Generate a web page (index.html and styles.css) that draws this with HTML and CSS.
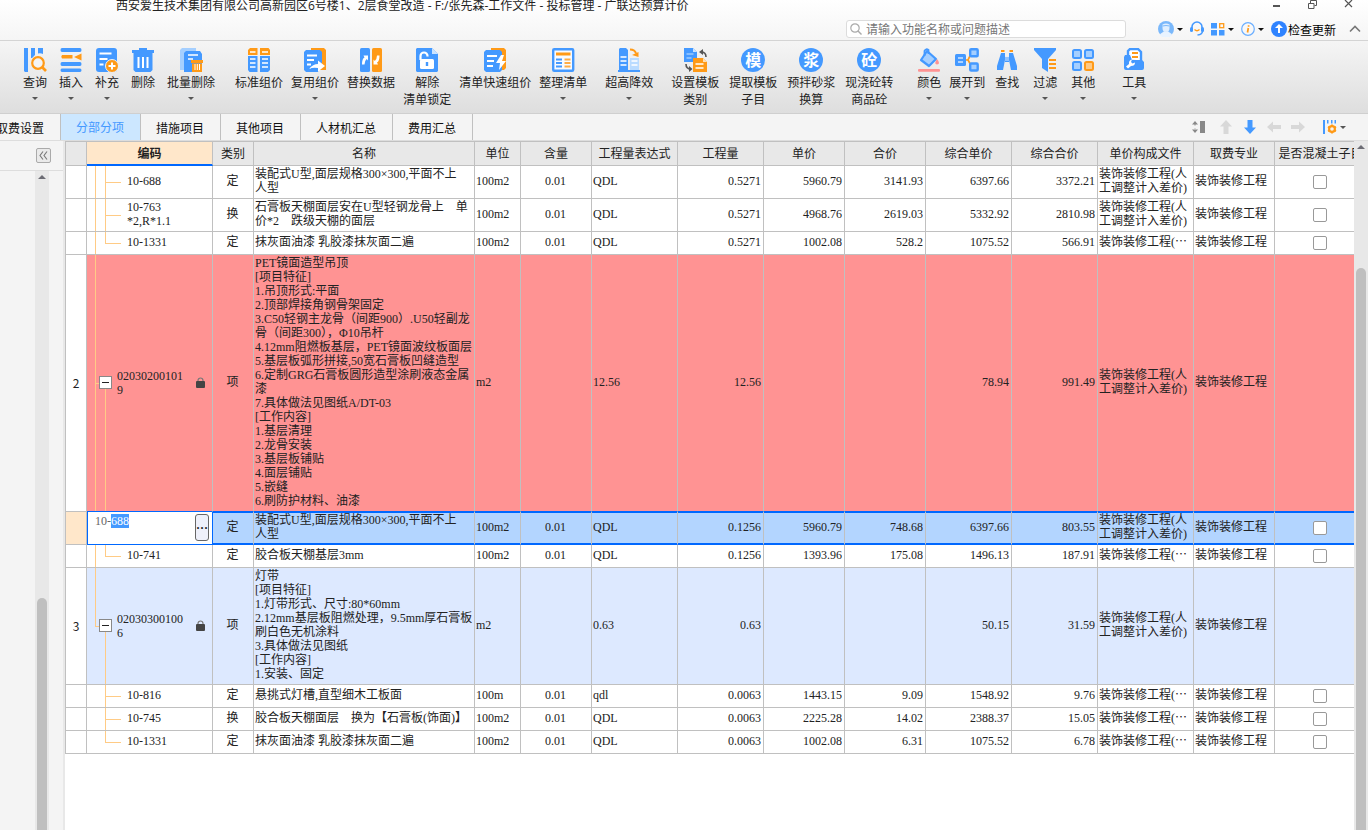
FILE: index.html
```html
<!DOCTYPE html>
<html lang="zh-CN">
<head>
<meta charset="utf-8">
<title>广联达预算计价</title>
<link rel="stylesheet" href="styles.css">
</head>
<body>
<div class="app">
  <header class="titlebar">
    <div class="caption">
      <h1 class="caption-text">西安爱生技术集团有限公司高新园区6号楼1、2层食堂改造 - F:/张先森-工作文件 - 投标管理 - 广联达预算计价</h1>
      <div class="window-buttons">
        <button aria-label="最小化"><svg width="9" height="10" viewBox="0 0 9 10"><path d="M1 6h7" stroke="#555" stroke-width="2"/></svg></button>
        <button aria-label="还原"><svg width="9" height="10" viewBox="0 0 9 10"><path d="M2.500 3V.5h6v5H6.500M.5 3.500h5.500v5H.5z" fill="none" stroke="#555"/></svg></button>
        <button aria-label="关闭"><svg width="9" height="10" viewBox="0 0 9 10"><path d="M1 0l7 7M8 0L1 7" stroke="#555" stroke-width="1.200"/></svg></button>
      </div>
    </div>
    <div class="utility">
      <label class="search">
        <svg width="12" height="12" viewBox="0 0 12 12"><circle cx="5" cy="5" r="4.200" fill="none" stroke="#aaa" stroke-width="1.200"/><path d="M8 8l3.500 3.500" stroke="#aaa" stroke-width="1.400"/></svg>
        <input type="text" aria-label="搜索" placeholder="请输入功能名称或问题描述">
      </label>
      <div class="utility-buttons">
        <button class="with-caret" aria-label="账户"><svg width="16" height="16" viewBox="0 0 16 16"><circle cx="8" cy="8" r="8" fill="#7ab8fb"/><path d="M2 14c0-2 3-2 4-4 1 1 3 1 4 0 1 2 4 2 4 4a8 8 0 0 1-12 0z" fill="#e8f3ff"/><path d="M4.500 3.500q3.500-2 7 0v3.500q0 4-3.500 4t-3.500-4z" fill="#e0efff"/><path d="M4.500 5q3.500-1 7 0" fill="none" stroke="#7ab8fb"/></svg><i class="caret dark"></i></button>
        <button aria-label="客服"><svg width="14" height="16" viewBox="0 0 14 16"><path d="M2 8V6a5 5 0 0 1 10 0v2" fill="none" stroke="#4499ff" stroke-width="1.600"/><rect x="0" y="6" width="3" height="5" rx="1.500" fill="#4499ff"/><rect x="11" y="6" width="3" height="5" rx="1.500" fill="#4499ff"/><path d="M12.500 10q0 3.500-5 4" fill="none" stroke="#4499ff" stroke-width="1.500"/><path d="M4.500 8.500q2.500 2.500 5 0" fill="none" stroke="#ff9a17" stroke-width="1.300"/></svg></button>
        <button class="with-caret" aria-label="应用"><svg width="14" height="14" viewBox="0 0 14 14"><path d="M0 1h6v5.500H0zM0 8h6v5.500H0zM8 8h5.500v5.500H8z" fill="#4499ff"/><rect x="8.700" y="1.700" width="4" height="4" fill="none" stroke="#ff9a17" stroke-width="1.300"/></svg><i class="caret dark"></i></button>
        <button class="with-caret" aria-label="信息"><svg width="14" height="14" viewBox="0 0 14 14"><circle cx="7" cy="7" r="6.300" fill="none" stroke="#6aaeff" stroke-width="1.200"/><path d="M7.300 6L6.500 10.500M7.600 3.300v1.400" stroke="#ff9a17" stroke-width="1.700"/></svg><i class="caret dark"></i></button>
        <button class="update"><svg width="16" height="16" viewBox="0 0 16 16"><circle cx="8" cy="8" r="8" fill="#2f83ff"/><path d="M8 3l4 4H9v5H7V7H4z" fill="#fff"/></svg><span>检查更新</span></button>
        <button class="fold" aria-label="收起功能区"><svg width="12" height="8" viewBox="0 0 12 8"><path d="M1 6.500l5-5 5 5" fill="none" stroke="#777" stroke-width="1.600"/></svg></button>
      </div>
    </div>
  </header>

  <div class="ribbon" role="toolbar">
    <div class="group edit">
      <button><svg viewBox="0 0 24 24"><path d="M1 0h4v24H2l-1-1zM8 0h4v7l-3 3H8zM15 0h5v6q-2-1-5-.500z" fill="#4499ff"/><circle cx="15" cy="15" r="5.800" fill="#f4f4f4" stroke="#ff9a17" stroke-width="2.200"/><path d="M19 19l4 4" stroke="#ff9a17" stroke-width="2.600"/></svg><span>查询</span><i class="caret"></i></button>
      <button><svg viewBox="0 0 24 24"><path d="M3 0h18q1.500 0 1.500 2t-1.500 2H3Q1.500 4 1.500 2T3 0zM3 14h18q1.500 0 1.500 2t-1.500 2H3q-1.500 0-1.500-2t1.500-2zM3 20.500h18q1.500 0 1.500 1.700T21 24H3q-1.500 0-1.500-1.800T3 20.500z" fill="#4499ff"/><path d="M3 7h10.500v3.500H3q-1.500-1.700 0-3.500zM15 9l7.500-3.500v7z" fill="#ff9a17"/></svg><span>插入</span><i class="caret"></i></button>
      <button><svg viewBox="0 0 24 24"><rect x="1" width="21" height="24" rx="3" fill="#4499ff"/><path d="M4.500 5.500h12M4.500 11h8M4.500 16.500h4" stroke="#fff" stroke-width="1.800"/><circle cx="17" cy="18" r="6.500" fill="#ff9a17" stroke="#e9f3ff"/><path d="M17 14.500v7M13.500 18h7" stroke="#fff" stroke-width="2"/></svg><span>补充</span><i class="caret"></i></button>
      <button><svg viewBox="0 0 24 24"><path d="M8 0h8v2h7v3H1V2h7zM2.500 5h19v17l-2 2h-15l-2-2z" fill="#4499ff"/><path d="M7.500 9v11M12 9v11M16.500 9v11" stroke="#fff" stroke-width="2"/></svg><span>删除</span></button>
      <button><svg viewBox="0 0 24 24"><path d="M1 2l2-2h14v22H1z" fill="#a5cfff"/><path d="M5 5l2-2h14l2 3v18H5z" fill="#4499ff"/><path d="M9 7h10M9 11h5" stroke="#fff" stroke-width="1.700"/><path d="M12 12h12v3H12zM13 15.500h10V24H13z" fill="#ff9a17"/><path d="M16 16v6M18.300 16v6M20.500 16v6" stroke="#fff"/></svg><span>批量删除</span><i class="caret"></i></button>
    </div>
    <div class="group pricing">
      <button><svg viewBox="0 0 24 24"><path d="M1 7V2l2-2h7.500v7zM13 7V0h8.500L23 2v5z" fill="#ff9a17"/><path d="M1 8h9.500v16H2.500L1 22zM13 8h10v14l-2 2h-8z" fill="#4499ff"/><path d="M3 4h5.500M15 4h6M3 11h5.500M15 11h6M3 15h5.500M15 15h6M3 19h5.500M15 19h6" stroke="#fff" stroke-width="1.500"/></svg><span>标准组价</span></button>
      <button><svg viewBox="0 0 24 24"><path d="M8 0h13l2 2v20H8z" fill="#ff9a17"/><path d="M1 4l2-2h14l2 2v10l-4 10H3l-2-2z" fill="#4499ff"/><path d="M4 7.500h10M4 12h7M4 16.500h4" stroke="#fff" stroke-width="1.800"/><path d="M6 21q4-5 9-5v-3.500l7 5.500-7 5.500V20q-5-1-9 1z" fill="#fff"/></svg><span>复用组价</span><i class="caret"></i></button>
      <button><svg viewBox="0 0 24 24"><rect x="1" width="10" height="24" rx="1.500" fill="#4499ff"/><rect x="13" width="10" height="24" rx="1.500" fill="#ff9a17"/><path d="M3 16.500q0-6 2.500-7L4.500 7.500H9v5l-1.300-1.500q-2 1.500-2.200 5.500zM20.500 7.500q0 6-2.500 7l1 2h-4.500v-5l1.300 1.500q2-1.500 2.200-5.500z" fill="#fff"/></svg><span>替换数据</span></button>
      <button><svg viewBox="0 0 24 24"><path d="M2 0h15l6 6v17l-1 1H2l-1-1V1z" fill="#4499ff"/><path d="M17 0l6 6h-6z" fill="#cbe3ff"/><rect x="5" y="11" width="14" height="10" rx="1.500" fill="#fff"/><path d="M5.500 12V8a3.500 3.500 0 0 1 7 0v.5" fill="none" stroke="#fff" stroke-width="2.200"/><path d="M12 14v4" stroke="#4499ff" stroke-width="2.400"/></svg><span>解除<br>清单锁定</span></button>
      <button><svg viewBox="0 0 24 24"><path d="M8 0h13l2 2v18l-2 2H8z" fill="#ff9a17"/><path d="M1 4l2-2h14l2 2v18l-2 2H3l-2-2z" fill="#4499ff"/><path d="M4 8h10M4 13h7M4 18h6" stroke="#fff" stroke-width="1.800"/><path d="M18 7l-5 8h4l-1 7 7-9h-4l2-6z" fill="#fff"/></svg><span>清单快速组价</span></button>
      <button><svg viewBox="0 0 24 24"><rect x="2.200" y="1.200" width="20" height="21.500" rx="1" fill="#f8fbff" stroke="#4499ff" stroke-width="2.400"/><path d="M5 4.500h14.500v3H5z" fill="#ff9a17"/><path d="M5 11.500h6M5 15h6M5 18.500h6" stroke="#4499ff" stroke-width="2"/><path d="M13.500 11.500h6M13.500 15h6M13.500 18.500h6" stroke="#ffad45" stroke-width="2"/></svg><span>整理清单</span><i class="caret"></i></button>
    </div>
    <div class="group">
      <button><svg viewBox="0 0 24 24"><path d="M2 1l1-1h6l2 2v20H2z" fill="#4499ff"/><path d="M1 22h22v2H1z" fill="#4499ff"/><path d="M13 10h9v12h-9z" fill="#b9dbff"/><path d="M3.500 9h6M3.500 13h6M3.500 17h6M14.500 13h6M14.500 17h6" stroke="#fff" stroke-width="1.700"/><path d="M13 1.500q5 0 6 4" fill="none" stroke="#ff9a17" stroke-width="2"/><path d="M15 7l6.500-3v5z" fill="#ff9a17"/></svg><span>超高降效</span><i class="caret"></i></button>
    </div>
    <div class="group template">
      <button><svg viewBox="0 0 24 24"><path d="M1 0h9l4 4v10H1z" fill="#4499ff"/><path d="M10 0l4 4h-4z" fill="#cbe3ff"/><path d="M3.500 6h7M3.500 10h5" stroke="#9ccaff" stroke-width="1.500"/><path d="M10 10h10l4 4v10H10z" fill="#ff9a17"/><path d="M20 10l4 4h-4z" fill="#ffe0b5"/><path d="M12.500 16h8M12.500 20h8" stroke="#fff" stroke-width="1.700"/><path d="M18 4q5 0 5 5M3 16q0 5 5 5" fill="none" stroke="#555" stroke-width="1.600"/><path d="M20 1v6l-4-3zM6 18v6l3.500-3z" fill="#555"/></svg><span>设置模板<br>类别</span></button>
      <button><b class="disc">模</b><span>提取模板<br>子目</span></button>
      <button><b class="disc">浆</b><span>预拌砂浆<br>换算</span></button>
      <button><b class="disc">砼</b><span>现浇砼转<br>商品砼</span></button>
    </div>
    <div class="group color">
      <button><svg viewBox="0 0 24 24"><path d="M10 3l9 8-7 7-8-6z" fill="#a5cfff" stroke="#4499ff" stroke-width="2.200" stroke-linejoin="round"/><path d="M7.500 8V3q1.500-3 4-1v4" fill="none" stroke="#4499ff" stroke-width="1.800"/><path d="M20 11q4 5 0 5.500-3.500-.5 0-5.500z" fill="#ff9393"/><rect x="1" y="21" width="22" height="2.800" rx="1" fill="#ff9393"/></svg><span>颜色</span><i class="caret"></i></button>
      <button><svg viewBox="0 0 24 24"><path d="M10 12h3l4-8M13 12l4 7" fill="none" stroke="#ff9a17" stroke-width="1.700"/><rect y="6" width="11" height="12" rx="1.500" fill="#4499ff"/><path d="M3 10h5M3 14h5" stroke="#cfe5ff" stroke-width="1.500"/><rect x="15.200" y="1.200" width="7.500" height="7" rx="1" fill="#a5cfff" stroke="#4499ff" stroke-width="2.400"/><rect x="15.200" y="15.500" width="7.500" height="7" rx="1" fill="#a5cfff" stroke="#4499ff" stroke-width="2.400"/></svg><span>展开到</span><i class="caret"></i></button>
    </div>
    <div class="group view">
      <button><svg viewBox="0 0 24 24"><path d="M6 5h4v7l-2 10H2v-4zM14 5h4l4 13v4h-6l-2-10zM10 9h4v5h-4z" fill="#4499ff"/><path d="M11 8v5M13 8v5" stroke="#dcebff"/><path d="M6 2h3.500v2H6zM14.500 2H18v2h-3.500z" fill="#ff9a17"/></svg><span>查找</span></button>
      <button><svg viewBox="0 0 24 24"><path d="M1 0h22v2l-8 9v13l-6-4v-9L1 2z" fill="#4499ff"/><path d="M16 12h7M16 16h7M16 20h7" stroke="#ff9a17" stroke-width="2"/></svg><span>过滤</span><i class="caret"></i></button>
      <button><svg viewBox="0 0 24 24"><g fill="#a5cfff" stroke="#4499ff" stroke-width="2"><rect x="2" y="2" width="8" height="8" rx="1.500"/><rect x="14" y="2" width="8" height="8" rx="1.500"/><rect x="2" y="14" width="8" height="8" rx="1.500"/><rect x="14" y="14" width="8" height="8" rx="1.500" fill="#ffc983" stroke="#ff9a17"/></g></svg><span>其他</span><i class="caret"></i></button>
    </div>
    <div class="group">
      <button><svg viewBox="0 0 24 24"><path d="M6 10V3l2-2h8l3 3v9" fill="#fff" stroke="#4499ff" stroke-width="2.400"/><path d="M10 5h6M10 9h6" stroke="#ff9a17" stroke-width="1.800"/><path d="M3 7h5l2 5h10l2 2v6q0 2-2 2H4q-2 0-2-2V9z" fill="#4499ff"/><path d="M4 18.500l3-2.500q-.5-4 3-4.500l-1 2.500 1.500 1.500 2.500-1q0 3.500-4 3.500l-3 2.500z" fill="#fff"/></svg><span>工具</span><i class="caret"></i></button>
    </div>
  </div>

  <div class="tabbar">
    <nav class="tabs">
      <a href="#fees">取费设置</a>
      <a href="#parts" class="active">分部分项</a>
      <a href="#measures">措施项目</a>
      <a href="#others">其他项目</a>
      <a href="#resources">人材机汇总</a>
      <a href="#summary">费用汇总</a>
    </nav>
    <div class="tab-tools">
      <button class="row-height" aria-label="行高"><svg width="14" height="14" viewBox="0 0 14 14"><path d="M0 4.500L3 1l3 3.500zM0 9.500L3 13l3-3.500zM2.500 4h1v1.500h-1zM2.500 8.500h1V10h-1zM8 1h5v12H8z" fill="#888"/></svg></button>
      <button aria-label="上移"><svg width="14" height="16" viewBox="0 0 14 16"><path d="M7 1l6 6.500H9.500V15h-5V7.500H1z" fill="#d8d8d8"/></svg></button>
      <button aria-label="下移"><svg width="14" height="16" viewBox="0 0 14 16"><path d="M7 15l6-6.500H9.500V1h-5v7.500H1z" fill="#4499ff"/></svg></button>
      <button aria-label="左移"><svg width="14" height="12" viewBox="0 0 14 12"><path d="M0 6l6-5.500V4h8v4H6v3.500z" fill="#d8d8d8"/></svg></button>
      <button aria-label="右移"><svg width="14" height="12" viewBox="0 0 14 12"><path d="M14 6L8 .5V4H0v4h8v3.500z" fill="#d8d8d8"/></svg></button>
      <button class="with-caret columns" aria-label="列设置"><svg width="14" height="16" viewBox="0 0 14 16"><path d="M0 1h2v14H0zM4 1h1.500v3.500H4zM8 1h1.500v3.500H8zM11.500 1H13v3.500h-1.500z" fill="#4499ff"/><circle cx="9" cy="10" r="2.900" fill="none" stroke="#ff9a17" stroke-width="2.200"/><path d="M9 5.500v2M9 12.500v2M5 7.800l1.700 1M11.300 11.200l1.700 1M13 7.800l-1.700 1M6.700 11.200l-1.700 1" stroke="#ff9a17" stroke-width="1.800"/></svg><i class="caret"></i></button>
    </div>
  </div>

  <main class="workspace">
    <aside class="side">
      <div class="side-head"><button class="collapse" aria-label="收起"><svg width="9" height="9" viewBox="0 0 9 9"><path d="M4 .5l-3 4 3 4M8 .5l-3 4 3 4" fill="none" stroke="#777" stroke-width="1.100"/></svg></button></div>
      <div class="scroll side-scroll"><i class="scroll-up"></i><i></i><i class="thumb"></i></div>
    </aside>
    <div class="grid-area">
      <table class="grid">
        <colgroup><col class="w21"><col class="w126"><col class="w41"><col><col class="w46"><col class="w71"><col class="w86"><col class="w86"><col class="w81"><col class="w81"><col class="w86"><col class="w86"><col class="w96"><col class="w81"><col class="w92"></colgroup>
        <thead>
          <tr><th></th><th class="current">编码</th><th>类别</th><th>名称</th><th>单位</th><th>含量</th><th>工程量表达式</th><th>工程量</th><th>单价</th><th>合价</th><th>综合单价</th><th>综合合价</th><th>单价构成文件</th><th>取费专业</th><th>是否混凝土子目</th></tr>
        </thead>
        <tbody>
          <tr><td class="no"></td><td class="code t-trunk t-mid">10-688</td><td class="mid">定</td><td>装配式U型,面层规格300×300,平面不上
人型</td><td>100m2</td><td class="mid">0.01</td><td>QDL</td><td class="num">0.5271</td><td class="num">5960.79</td><td class="num">3141.93</td><td class="num">6397.66</td><td class="num">3372.21</td><td>装饰装修工程(人
工调整计入差价)</td><td>装饰装修工程</td><td class="mid"><input type="checkbox" aria-label="是否混凝土子目"></td></tr>
          <tr><td class="no"></td><td class="code t-trunk t-mid">10-763
*2,R*1.1</td><td class="mid">换</td><td>石膏板天棚面层安在U型轻钢龙骨上　单
价*2　跌级天棚的面层</td><td>100m2</td><td class="mid">0.01</td><td>QDL</td><td class="num">0.5271</td><td class="num">4968.76</td><td class="num">2619.03</td><td class="num">5332.92</td><td class="num">2810.98</td><td>装饰装修工程(人
工调整计入差价)</td><td>装饰装修工程</td><td class="mid"><input type="checkbox" aria-label="是否混凝土子目"></td></tr>
          <tr><td class="no"></td><td class="code t-trunk t-end">10-1331</td><td class="mid">定</td><td>抹灰面油漆 乳胶漆抹灰面二遍</td><td>100m2</td><td class="mid">0.01</td><td>QDL</td><td class="num">0.5271</td><td class="num">1002.08</td><td class="num">528.2</td><td class="num">1075.52</td><td class="num">566.91</td><td>装饰装修工程(⋯</td><td>装饰装修工程</td><td class="mid"><input type="checkbox" aria-label="是否混凝土子目"></td></tr>
          <tr class="item marked"><td class="no">2</td><td class="code parent t-open"><div class="node"><button class="toggle" aria-label="折叠"></button><span>02030200101
9</span><svg class="lock" width="9" height="11" viewBox="0 0 9 11"><path d="M2 5V3.500a2.500 2.500 0 0 1 5 0V5" fill="none" stroke="#777" stroke-width="1.200"/><rect x="0" y="4" width="9" height="7" rx="1" fill="#444"/></svg></div></td><td class="mid">项</td><td>PET镜面造型吊顶
[项目特征]
1.吊顶形式:平面
2.顶部焊接角钢骨架固定
3.C50轻钢主龙骨（间距900）.U50轻副龙
骨（间距300），Φ10吊杆
4.12mm阻燃板基层，PET镜面波纹板面层
5.基层板弧形拼接,50宽石膏板凹缝造型
6.定制GRG石膏板圆形造型涂刷液态金属
漆
7.具体做法见图纸A/DT-03
[工作内容]
1.基层清理
2.龙骨安装
3.基层板铺贴
4.面层铺贴
5.嵌缝
6.刷防护材料、油漆</td><td>m2</td><td></td><td>12.56</td><td class="num">12.56</td><td></td><td></td><td class="num">78.94</td><td class="num">991.49</td><td>装饰装修工程(人
工调整计入差价)</td><td>装饰装修工程</td><td></td></tr>
          <tr class="selected"><td class="no"></td><td class="editing"><div class="editor"><input id="code-input" type="text" aria-label="编码" value="10-688"><button aria-label="更多">···</button></div></td><td class="mid">定</td><td>装配式U型,面层规格300×300,平面不上
人型</td><td>100m2</td><td class="mid">0.01</td><td>QDL</td><td class="num">0.1256</td><td class="num">5960.79</td><td class="num">748.68</td><td class="num">6397.66</td><td class="num">803.55</td><td>装饰装修工程(人
工调整计入差价)</td><td>装饰装修工程</td><td class="mid"><input type="checkbox" aria-label="是否混凝土子目"></td></tr>
          <tr><td class="no"></td><td class="code t-trunk t-end">10-741</td><td class="mid">定</td><td>胶合板天棚基层3mm</td><td>100m2</td><td class="mid">0.01</td><td>QDL</td><td class="num">0.1256</td><td class="num">1393.96</td><td class="num">175.08</td><td class="num">1496.13</td><td class="num">187.91</td><td>装饰装修工程(⋯</td><td>装饰装修工程</td><td class="mid"><input type="checkbox" aria-label="是否混凝土子目"></td></tr>
          <tr class="item"><td class="no">3</td><td class="code parent t-open t-last"><div class="node"><button class="toggle" aria-label="折叠"></button><span>02030300100
6</span><svg class="lock" width="9" height="11" viewBox="0 0 9 11"><path d="M2 5V3.500a2.500 2.500 0 0 1 5 0V5" fill="none" stroke="#777" stroke-width="1.200"/><rect x="0" y="4" width="9" height="7" rx="1" fill="#444"/></svg></div></td><td class="mid">项</td><td>灯带
[项目特征]
1.灯带形式、尺寸:80*60mm
2.12mm基层板阻燃处理，9.5mm厚石膏板
刷白色无机涂料
3.具体做法见图纸
[工作内容]
1.安装、固定</td><td>m2</td><td></td><td>0.63</td><td class="num">0.63</td><td></td><td></td><td class="num">50.15</td><td class="num">31.59</td><td>装饰装修工程(人
工调整计入差价)</td><td>装饰装修工程</td><td></td></tr>
          <tr><td class="no"></td><td class="code t-mid">10-816</td><td class="mid">定</td><td>悬挑式灯槽,直型细木工板面</td><td>100m</td><td class="mid">0.01</td><td>qdl</td><td class="num">0.0063</td><td class="num">1443.15</td><td class="num">9.09</td><td class="num">1548.92</td><td class="num">9.76</td><td>装饰装修工程(⋯</td><td>装饰装修工程</td><td class="mid"><input type="checkbox" aria-label="是否混凝土子目"></td></tr>
          <tr><td class="no"></td><td class="code t-mid">10-745</td><td class="mid">换</td><td>胶合板天棚面层　换为【石膏板(饰面)】</td><td>100m2</td><td class="mid">0.01</td><td>QDL</td><td class="num">0.0063</td><td class="num">2225.28</td><td class="num">14.02</td><td class="num">2388.37</td><td class="num">15.05</td><td>装饰装修工程(⋯</td><td>装饰装修工程</td><td class="mid"><input type="checkbox" aria-label="是否混凝土子目"></td></tr>
          <tr><td class="no"></td><td class="code t-end">10-1331</td><td class="mid">定</td><td>抹灰面油漆 乳胶漆抹灰面二遍</td><td>100m2</td><td class="mid">0.01</td><td>QDL</td><td class="num">0.0063</td><td class="num">1002.08</td><td class="num">6.31</td><td class="num">1075.52</td><td class="num">6.78</td><td>装饰装修工程(⋯</td><td>装饰装修工程</td><td class="mid"><input type="checkbox" aria-label="是否混凝土子目"></td></tr>
        </tbody>
      </table>
    </div>
    <div class="scroll main-scroll"><i class="scroll-up"></i><i></i><i class="thumb"></i></div>
  </main>
</div>
<script src="app.js"></script>
</body>
</html>
```
FILE: styles.css
```css
:root {
  --blue: #4499ff;
  --line: #c0c0c0;
  --focus: #0068ff;
  --tree: #ffcb85;
}
* { box-sizing: border-box; }
body {
  margin: 0;
  font: 12px/17px "Noto Sans CJK SC", sans-serif;
  color: #222;
  background: #f4f4f4;
}
button {
  border: 0;
  padding: 0;
  background: none;
  font: inherit;
  color: inherit;
}
svg { display: block; flex: none; }
.app {
  display: flex;
  flex-direction: column;
  height: 100vh;
  overflow: hidden;
}

/* Title bar */
.titlebar {
  flex: none;
  height: 41px;
  border-bottom: 1px solid #d4d4d4;
  background: linear-gradient(#fff, #f5f5f5);
}
.caption {
  display: flex;
  justify-content: space-between;
  height: 20px;
  padding: 0 15px 0 116px;
}
.caption-text {
  margin: 0;
  font-family: "Open Sans", "Noto Sans CJK SC", sans-serif;
  font-size: 12px;
  font-weight: 400;
  line-height: 12px;
  white-space: nowrap;
}
.window-buttons {
  display: flex;
  align-items: flex-start;
  gap: 27px;
}
.utility {
  display: flex;
  justify-content: flex-end;
  align-items: center;
  gap: 32px;
  height: 18px;
  padding-right: 7px;
}
.search {
  display: flex;
  align-items: center;
  gap: 4px;
  width: 280px;
  height: 18px;
  padding: 0 3px;
  border: 1px solid #dcdcdc;
  border-radius: 3px;
  background: #fff;
}
.search input {
  flex: 1;
  min-width: 0;
  padding: 0 0 2px;
  border: 0;
  outline: 0;
  background: none;
  font: inherit;
}
.search input::placeholder { color: #777; }
.utility-buttons {
  display: flex;
  align-items: center;
  gap: 7px;
}
.with-caret {
  display: flex;
  align-items: center;
  gap: 3px;
}
.caret {
  width: 0;
  border: 3px solid transparent;
  border-top-color: #555;
  border-bottom: 0;
}
.caret.dark { border-top-color: #111; }
.update {
  display: flex;
  align-items: center;
  gap: 1px;
  color: #000;
}
.fold { margin-left: 6px; }

/* Ribbon */
.ribbon {
  display: flex;
  flex: none;
  height: 73px;
  padding: 7px 0 0 23px;
  border-bottom: 1px solid #cfcfcf;
  background: linear-gradient(#f5f5f5, #dedede);
  white-space: nowrap;
}
.group {
  display: flex;
  align-items: flex-start;
  gap: 8px;
  margin-right: 18px;
}
.group.edit { gap: 12px; margin-right: 20px; }
.group.template { gap: 10px; margin-right: 24px; }
.group.color { margin-right: 10px; }
.group.view { gap: 14px; margin-right: 27px; }
.group button {
  display: flex;
  flex-direction: column;
  align-items: center;
}
.group svg,
.disc {
  width: 24px;
  height: 24px;
  margin-bottom: 1px;
}
.group .caret { margin-top: 7px; }
.disc {
  border-radius: 50%;
  background: var(--blue);
  color: #fff;
  font-size: 16px;
  line-height: 23px;
}

/* Tabs */
.tabbar {
  display: flex;
  flex: none;
  justify-content: space-between;
  height: 27px;
  border-bottom: 1px solid #ddd;
  overflow: hidden;
}
.tabs {
  display: flex;
  margin-left: -20px;
}
.tabs a {
  padding: 1px 16px 0 15px;
  border-right: 1px solid var(--line);
  color: #111;
  line-height: 25px;
  text-decoration: none;
}
.tabs a:first-child { padding-left: 16px; }
.tabs .active {
  padding-top: 0;
  background: #cce7ff;
  color: var(--blue);
}
.tab-tools {
  display: flex;
  align-items: center;
  gap: 10px;
  padding-right: 22px;
}
.row-height { margin-right: 3px; }
.columns { margin-left: 8px; }

/* Workspace */
.workspace {
  display: flex;
  flex: 1;
  min-height: 0;
}
.side {
  display: flex;
  flex: none;
  flex-direction: column;
  width: 65px;
  border-right: 2px solid #e8e8e8;
}
.side-head {
  display: flex;
  justify-content: flex-end;
  flex: none;
  height: 30px;
  padding: 7px 12px 0 0;
  border-bottom: 1px solid #ddd;
}
.collapse {
  display: flex;
  align-items: center;
  justify-content: center;
  width: 15px;
  height: 15px;
  border: 1px solid #aaa;
  border-radius: 2px;
  background: #eaeaea;
}
.scroll {
  display: grid;
  flex: none;
  width: 14px;
  background: #e8e8e8;
}
.side-scroll {
  flex: 1;
  grid-template-rows: 12px 415fr 232fr;
  margin-left: 35px;
}
.main-scroll { grid-template-rows: 12px 115fr 562fr; }
.scroll-up {
  place-self: center;
  width: 0;
  border: 4px solid transparent;
  border-top: 0;
  border-bottom-color: #6c6c74;
}
.thumb {
  margin: 0 2px;
  border-radius: 5px 5px 0 0;
  background: #bfbfbf;
}
.grid-area {
  flex: 1;
  min-width: 0;
  overflow: hidden;
  background: #fff;
}

/* Bill of quantities */
.grid {
  width: 100%;
  min-width: 1302px;
  table-layout: fixed;
  border-collapse: separate;
  border-spacing: 0;
  border: solid var(--line);
  border-width: 1px 0 0 1px;
}
.w21 { width: 21px; }
.w41 { width: 41px; }
.w46 { width: 46px; }
.w71 { width: 71px; }
.w81 { width: 81px; }
.w86 { width: 86px; }
.w92 { width: 92px; }
.w96 { width: 96px; }
.w126 { width: 126px; }
.grid th {
  height: 24px;
  padding: 0 0 2px;
  border: solid var(--line);
  border-width: 0 1px 1px 0;
  background: #e8e8e8;
  font-weight: 400;
  white-space: nowrap;
}
.grid th.current {
  padding-bottom: 1px;
  border-bottom: 2px solid var(--focus);
  background: #ffe7ca;
  font-weight: 700;
}
.grid td {
  height: 23px;
  padding: 1px 2px 3px 1px;
  border: solid var(--line);
  border-width: 0 1px 1px 0;
  font-family: "Liberation Serif", "Noto Sans CJK SC", serif;
  line-height: 14px;
  white-space: pre;
}
.grid .no {
  padding: 0;
  font-family: "Noto Sans CJK SC", sans-serif;
  text-align: center;
}
.grid .mid { text-align: center; }
.grid .num { text-align: right; }
.grid .code { padding-left: 40px; background-repeat: no-repeat; }
.t-mid,
.t-end {
  background-image: linear-gradient(var(--tree), var(--tree)), linear-gradient(var(--tree), var(--tree)), linear-gradient(var(--tree), var(--tree));
}
.t-mid {
  background-size: 0 0, 1px 100%, 16px 1px;
  background-position: 8px 0, 18px 0, 18px 50%;
}
.t-end {
  background-size: 0 0, 1px 50%, 16px 1px;
  background-position: 8px 0, 18px 0, 18px 50%;
}
.t-mid.t-trunk { background-size: 1px 100%, 1px 100%, 16px 1px; }
.t-end.t-trunk { background-size: 1px 100%, 1px 50%, 16px 1px; }
.t-open {
  background-image: linear-gradient(var(--tree), var(--tree)), linear-gradient(var(--tree), var(--tree)), linear-gradient(var(--tree), var(--tree));
  background-size: 1px 100%, 1px 50%, 4px 1px;
  background-position: 8px 0, 18px 100%, 8px 50%;
}
.t-open.t-last { background-size: 1px 50%, 1px 50%, 4px 1px; }
.grid .parent { padding: 0 7px 1px 12px; }
.node {
  display: flex;
  align-items: center;
  gap: 5px;
}
.node .lock { margin-left: auto; }
.toggle {
  flex: none;
  width: 13px;
  height: 13px;
  border: 1px solid #888;
  background: linear-gradient(#222, #222) center / 7px 1px no-repeat #fff;
}
.item td { background-color: #dde9ff; }
.item.marked td { background-color: #ff9393; }
.item .no,
.item.marked .no { background-color: #fff; }
.item.marked td:not(.no) { border-bottom-color: var(--focus); }
.selected td {
  border-bottom-color: var(--focus);
  background: #b3d5ff;
  box-shadow: inset 0 1px var(--focus), inset 0 -1px var(--focus);
}
.selected .no {
  border-color: var(--line);
  background: #ffe7ca;
  box-shadow: none;
}
.grid .editing {
  padding: 0;
  border-right-color: var(--focus);
  background: #fff;
  box-shadow: inset 1px 0 var(--focus);
  vertical-align: top;
}
.editor {
  display: flex;
  align-items: flex-start;
  padding: 2px 3px 2px 8px;
}
.editor input {
  flex: 1;
  min-width: 0;
  height: 14px;
  padding: 0;
  border: 0;
  outline: 0;
  background: none;
  color: #666;
  font: inherit;
}
.editor input::selection {
  background: var(--blue);
  color: #fff;
}
.editor button {
  width: 14px;
  height: 27px;
  border: 1px solid #666;
  border-radius: 3px;
  background: #eef0fa;
  font-weight: 700;
}
.grid input[type="checkbox"] {
  appearance: none;
  display: block;
  width: 14px;
  height: 14px;
  margin: 1px auto 0;
  border: 1px solid #999;
  border-radius: 2px;
  background: #fff;
}
```
FILE: app.js
```js
const codeInput = document.getElementById('code-input');
codeInput.focus();
codeInput.setSelectionRange(3, 6);
```
